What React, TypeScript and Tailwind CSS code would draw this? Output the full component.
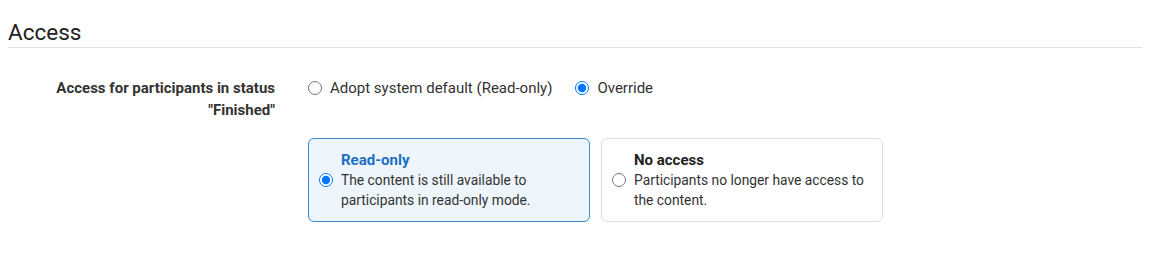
import { useState } from 'react';

type AccessMode = 'read' | 'none';

const options: { id: AccessMode; title: string; text: string }[] = [
  {
    id: 'read',
    title: 'Read-only',
    text: 'The content is still available to participants in read-only mode.',
  },
  {
    id: 'none',
    title: 'No access',
    text: 'Participants no longer have access to the content.',
  },
];

export default function App() {
  const [source, setSource] = useState<'default' | 'override'>('override');
  const [mode, setMode] = useState<AccessMode>('read');

  return (
    <div className="px-2 pt-[19px] font-['Roboto',sans-serif] text-[#333]">
      <h2 className="text-[22.5px] leading-[26px] text-[#222] pb-[2px] border-b border-[#e3e3e3]">
        Access
      </h2>

      <div className="flex mt-[29px]">
        <div className="w-[267px] shrink-0 text-right text-[15px] font-bold leading-[22px]">
          Access for participants in status
          <br />
          "Finished"
        </div>

        <div className="ml-[33px]">
          <div className="flex items-center gap-[23px] text-[15px] leading-[22px]">
            <label className="flex items-center gap-2">
              <input
                type="radio"
                name="source"
                className="m-0 w-[14px] h-[14px]"
                checked={source === 'default'}
                onChange={() => setSource('default')}
              />
              Adopt system default (Read-only)
            </label>
            <label className="flex items-center gap-2">
              <input
                type="radio"
                name="source"
                className="m-0 w-[14px] h-[14px]"
                checked={source === 'override'}
                onChange={() => setSource('override')}
              />
              Override
            </label>
          </div>

          <div className="flex gap-[11px] mt-[39px]">
            {options.map(opt => {
              const active = mode === opt.id;
              return (
                <label
                  key={opt.id}
                  className={
                    active
                      ? 'w-[282px] flex items-center px-[10px] py-[11px] rounded-md border border-[#3a8ad6] bg-[#eef5fc]'
                      : 'w-[282px] flex items-center px-[10px] py-[11px] rounded-md border border-[#d9dde3] bg-white'
                  }
                >
                  <input
                    type="radio"
                    name="mode"
                    className="m-0 w-[14px] h-[14px] shrink-0"
                    checked={active}
                    onChange={() => setMode(opt.id)}
                  />
                  <div className="ml-[8px] text-[13.8px] leading-5">
                    <div
                      className={
                        active
                          ? 'text-[15px] font-bold text-[#1a6fc2]'
                          : 'text-[15px] font-bold text-[#222]'
                      }
                    >
                      {opt.title}
                    </div>
                    <div>{opt.text}</div>
                  </div>
                </label>
              );
            })}
          </div>
        </div>
      </div>
    </div>
  );
}
